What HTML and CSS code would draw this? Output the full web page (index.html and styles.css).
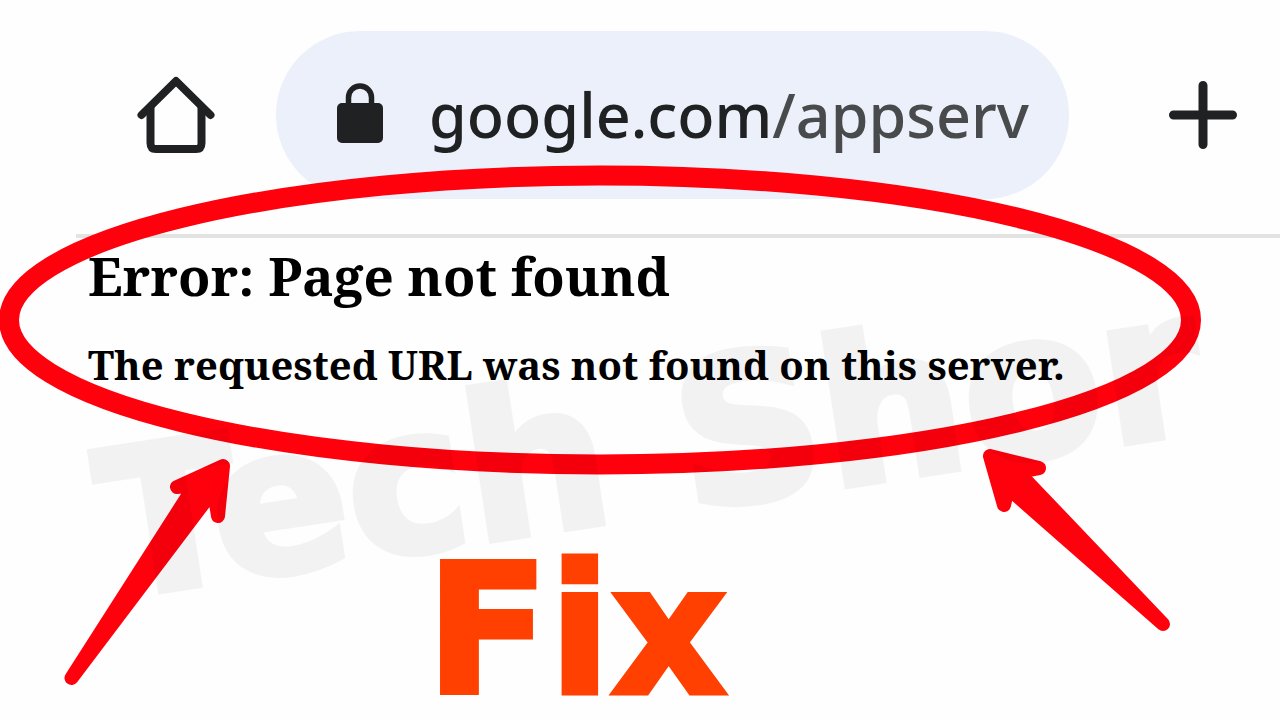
FILE: index.html
```
<!DOCTYPE html>
<html lang="en">
<head>
<meta charset="utf-8">
<meta name="viewport" content="width=device-width, initial-scale=1">
<title>Error: Page not found</title>
<link rel="stylesheet" href="styles.css">
</head>
<body>
<div class="page">
  <header class="toolbar">
    <button class="icon-button home" type="button" aria-label="Home">
      <svg width="80" height="80" viewBox="0 0 80 80" fill="none" stroke="currentColor" stroke-width="8" stroke-linecap="round" stroke-linejoin="round"><path d="M5.500 40 40 6 74.500 40"/><path d="M14.500 32V68Q14.500 74 20 74H60Q65.500 74 65.500 68V32" stroke-linecap="butt"/></svg>
    </button>
    <div class="address">
      <svg class="lock" width="48" height="64" viewBox="0 0 48 64"><rect x="1" y="20" width="46" height="40" rx="5" fill="currentColor"/><path d="M12.500 23V14.500a11.500 11.500 0 0 1 23 0V23" fill="none" stroke="currentColor" stroke-width="5.500"/></svg>
      <span class="url">google.com<span class="path">/appserv</span></span>
    </div>
    <button class="icon-button plus" type="button" aria-label="New tab">
      <svg width="72" height="72" viewBox="0 0 72 72" fill="none" stroke="currentColor" stroke-width="9" stroke-linecap="round"><path d="M36 6.500V65.500M6.500 36H65.500"/></svg>
    </button>
  </header>
  <main class="content">
    <h1 class="title">Error: Page not found</h1>
    <p class="message">The requested URL was not found on this server.</p>
    <p class="fix">Fix</p>
  </main>
  <svg class="marks" viewBox="0 0 1280 720" aria-hidden="true">
    <ellipse cx="600" cy="320" rx="591" ry="144.500" fill="none" stroke="#ff000d" stroke-width="20"/>
    <g fill="#ff000d" stroke="#ff000d" stroke-width="14" stroke-linejoin="round">
      <path d="M71.500 678 195 485 177 487 223 466 218 516 214 491 203 504Z"/>
      <path d="M1163 624 1008 488 1004 505 990 456 1039 468 1018 472Z"/>
    </g>
    <text class="watermark" transform="translate(112 598) rotate(-8.700)">Tech Shor</text>
  </svg>
</div>
</body>
</html>
```
FILE: styles.css
```
* { box-sizing: border-box; }

body {
  margin: 0;
  background: #fefefe;
  color: #000;
}

.page {
  position: relative;
  min-height: 100vh;
  overflow: hidden;
}

.toolbar {
  display: flex;
  align-items: center;
  padding: 31px 41px 35px 136px;
  color: #202122;
}

.icon-button {
  display: flex;
  padding: 0;
  border: 0;
  background: none;
  color: inherit;
}

.address {
  flex: 1;
  display: flex;
  align-items: center;
  gap: 45px;
  min-width: 0;
  height: 168px;
  margin: 0 98px 0 60px;
  padding: 0 36px 0 60px;
  border-radius: 84px;
  background: #ebf0fa;
}

.lock {
  flex: none;
  overflow: visible;
}

.url {
  font: 500 61px/90px "Noto Sans", sans-serif;
  white-space: nowrap;
}

.path { color: #484a4b; }

.content {
  margin-left: 76px;
  padding: 8px 12px 0;
  border-top: 4px solid #e3e3e1;
  font-family: "Noto Serif", "DejaVu Serif Condensed", "DejaVu Serif", serif;
}

.title {
  margin: 0;
  font-size: 53px;
  line-height: 60px;
  font-weight: 700;
}

.message {
  margin: 35px 0 0;
  font-size: 40px;
  line-height: 48px;
  font-weight: 700;
}

.fix {
  margin: 172px 0 0 338px;
  color: #ff4000;
  font: 700 180px/140px "DejaVu Sans", sans-serif;
  -webkit-text-stroke: 5px #ff4000;
}

.marks {
  position: absolute;
  top: 0;
  left: 0;
  width: 100%;
  pointer-events: none;
}

.watermark {
  font: 700 202px "DejaVu Sans", sans-serif;
  fill: #000;
  stroke: #000;
  stroke-width: 7;
  opacity: 0.045;
}
```
